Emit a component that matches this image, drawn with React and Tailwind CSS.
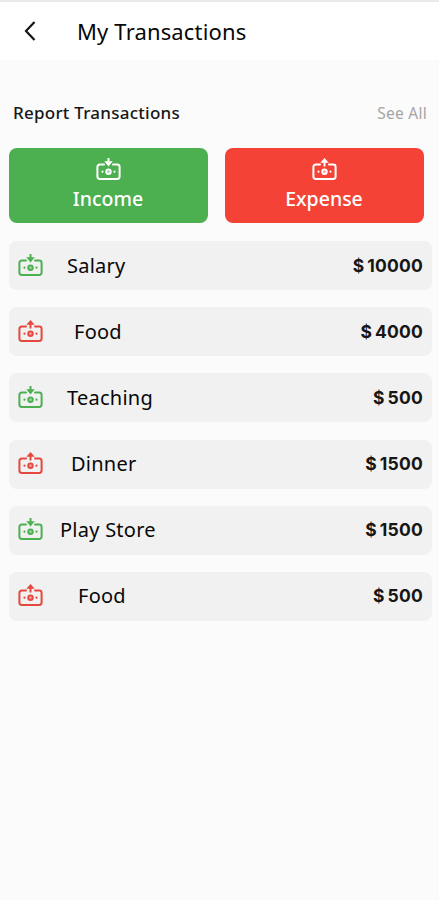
import { clsx } from 'clsx';

const transactions = [
  { id: 1, name: 'Salary', amount: 10000, type: 'income', offset: 'pl-[23px]' },
  { id: 2, name: 'Food', amount: 4000, type: 'expense', offset: 'pl-[30px]' },
  { id: 3, name: 'Teaching', amount: 500, type: 'income', offset: 'pl-[23px]' },
  { id: 4, name: 'Dinner', amount: 1500, type: 'expense', offset: 'pl-[27px]' },
  { id: 5, name: 'Play Store', amount: 1500, type: 'income', offset: 'pl-[16px]' },
  { id: 6, name: 'Food', amount: 500, type: 'expense', offset: 'pl-[34px]' },
];

function MoneyIcon({ type, className }) {
  return (
    <svg width="26" height="24" viewBox="0 0 26 24" fill="none" className={className}>
      {/* Bank note, open at the top for the arrow */}
      <path
        d="M8 6.5H3.8A2.4 2.4 0 0 0 1.4 8.9v9.6a2.4 2.4 0 0 0 2.4 2.4h17.4a2.4 2.4 0 0 0 2.4-2.4V8.9a2.4 2.4 0 0 0-2.4-2.4H17"
        stroke="currentColor"
        strokeWidth="2"
        strokeLinecap="round"
      />
      <circle cx="12.5" cy="13.7" r="2.3" fill="currentColor" fillOpacity="0.5" stroke="currentColor" strokeWidth="1.8" />
      <circle cx="6.5" cy="13.7" r="1.1" fill="currentColor" />
      <circle cx="18.5" cy="13.7" r="1.1" fill="currentColor" />
      {type === 'income' ? (
        <path d="M11.500 0h2v3.300h3.200L12.500 8.500 8.300 3.300h3.200z" fill="currentColor" />
      ) : (
        <path d="M12.500 0l4.200 4.800h-3.200v3.800h-2V4.800H8.300z" fill="currentColor" />
      )}
    </svg>
  );
}

function SummaryButton({ type, label }) {
  return (
    <button
      className={clsx(
        'h-[75px] w-[199px] rounded-lg flex flex-col items-center pt-[10px] text-white',
        type === 'income' ? 'bg-[#4caf50]' : 'bg-[#f44336]'
      )}
    >
      <MoneyIcon type={type} />
      <span className="mt-[4px] pr-px text-[19.5px] leading-[26px] font-medium">{label}</span>
    </button>
  );
}

function TransactionRow({ item }) {
  return (
    <div className="h-[49px] rounded-lg bg-[#f1f1f1] flex items-center px-[9px]">
      <MoneyIcon
        type={item.type}
        className={item.type === 'income' ? 'text-[#4caf50]' : 'text-[#e5483f]'}
      />
      <span className={clsx('text-[20px] leading-6 tracking-[0.25px] text-[#080808]', item.offset)}>
        {item.name}
      </span>
      <span className="ml-auto font-['Inter','Noto_Sans',sans-serif] text-[17.5px] leading-6 font-bold tracking-[0.2px] [word-spacing:-1.5px] text-[#161616]">
        $ {item.amount}
      </span>
    </div>
  );
}

export default function App() {
  return (
    <div className="h-[900px] bg-[#fbfbfb] font-['Noto_Sans',sans-serif] overflow-hidden">
      <header className="h-[60px] border-t-2 border-[#e9e9e9] bg-white flex items-center pl-[23px]">
        <svg width="14" height="22" viewBox="0 0 14 22" fill="none">
          <path d="M11.500 2L3 11l8.500 9" stroke="#161616" strokeWidth="2.2" />
        </svg>
        <h1 className="-mt-px ml-[40px] text-[22px] leading-7 tracking-[0.15px] text-[#080808]">My Transactions</h1>
      </header>

      <div className="mt-[41px] pl-[13px] pr-3 h-6 flex items-center justify-between">
        <h2 className="text-[17px] font-medium tracking-[0.25px] text-[#161616]">Report Transactions</h2>
        <span className="mt-[2px] text-[15.5px] tracking-[0.25px] text-[#a5a5a5]">See All</span>
      </div>

      <div className="mt-[23px] pl-[9px] flex gap-[17px]">
        <SummaryButton type="income" label="Income" />
        <SummaryButton type="expense" label="Expense" />
      </div>

      <div className="mt-[18px] pl-[9px] pr-[7px] flex flex-col gap-[17.2px]">
        {transactions.map((item) => (
          <TransactionRow key={item.id} item={item} />
        ))}
      </div>
    </div>
  );
}
